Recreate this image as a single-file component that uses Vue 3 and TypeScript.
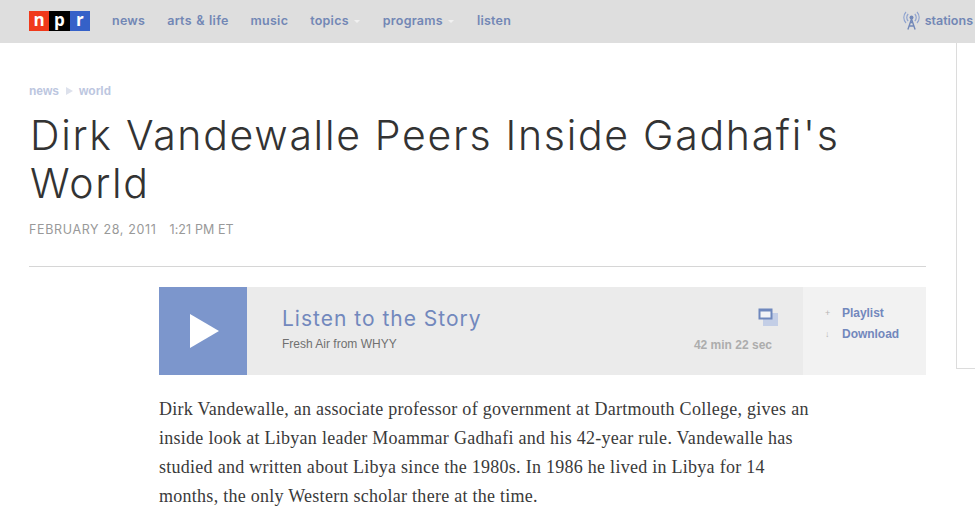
<template>
  <div class="page">
    <header class="top-nav">
      <div class="logo" aria-label="NPR">
        <span class="logo-n">n</span>
        <span class="logo-p">p</span>
        <span class="logo-r">r</span>
      </div>
      <nav class="nav-links">
        <a v-for="link in navLinks" :key="link.label" class="nav-link" :class="{ 'has-menu': link.menu }">
          {{ link.label }}
        </a>
      </nav>
      <a class="stations">
        <svg class="stations-icon" width="17" height="19" viewBox="0 0 17 19" fill="none" stroke="#8fa3cf">
          <circle cx="8.5" cy="6.5" r="2" fill="#7288b8" stroke="none" />
          <path d="M5.2 3a5 5 0 0 0 0 7M11.8 3a5 5 0 0 1 0 7" stroke-width="1.2" />
          <path d="M3 1a8 8 0 0 0 0 11M14 1a8 8 0 0 1 0 11" stroke-width="1.1" />
          <path d="M8.5 8l-3.6 10.5M8.5 8l3.6 10.5M6 15h5M7 11.5h3" stroke="#7288b8" stroke-width="1.4" />
        </svg>
        <span>stations</span>
      </a>
    </header>

    <div class="layout">
      <main class="story">
        <div class="crumbs">
          <a>news</a>
          <span class="crumb-arrow"></span>
          <a>world</a>
        </div>
        <h1 class="headline">Dirk Vandewalle Peers Inside Gadhafi's World</h1>
        <div class="dateline">
          <span class="date">FEBRUARY 28, 2011</span>
          <span class="time">1:21 PM ET</span>
        </div>

        <section class="player">
          <button class="play" aria-label="Play">
            <span class="play-arrow"></span>
          </button>
          <div class="player-main">
            <div class="player-text">
              <h2>Listen to the Story</h2>
              <p>Fresh Air from WHYY</p>
            </div>
            <div class="player-meta">
              <svg class="popout" width="20" height="18" viewBox="0 0 20 18">
                <rect x="5" y="5" width="15" height="13" fill="#c3cee6" />
                <rect x="0.5" y="0.5" width="14" height="11" fill="#6f88bd" />
                <rect x="2.5" y="3.5" width="10" height="6" fill="#f2f3f6" />
              </svg>
              <span class="duration">42 min 22 sec</span>
            </div>
          </div>
          <ul class="player-actions">
            <li v-for="action in actions" :key="action.label">
              <span class="action-mark">{{ action.mark }}</span>
              <a>{{ action.label }}</a>
            </li>
          </ul>
        </section>

        <p class="teaser">
          Dirk Vandewalle, an associate professor of government at Dartmouth College, gives an
          inside look at Libyan leader Moammar Gadhafi and his 42-year rule. Vandewalle has
          studied and written about Libya since the 1980s. In 1986 he lived in Libya for 14
          months, the only Western scholar there at the time.
        </p>
      </main>
      <aside class="rail"></aside>
    </div>
  </div>
</template>

<script setup lang="ts">
interface NavLink {
  label: string;
  menu?: boolean;
}

const navLinks: NavLink[] = [
  { label: 'news' },
  { label: 'arts & life' },
  { label: 'music' },
  { label: 'topics', menu: true },
  { label: 'programs', menu: true },
  { label: 'listen' },
];

const actions = [
  { mark: '+', label: 'Playlist' },
  { mark: '↓', label: 'Download' },
];
</script>

<style>
html,
body {
  margin: 0;
  background: #fff;
  overflow: hidden;
}
</style>

<style scoped>
.page {
  height: 513px;
  overflow: hidden;
  font-family: 'Liberation Sans', Arial, sans-serif;
}

.top-nav {
  display: flex;
  align-items: center;
  height: 43px;
  padding: 0 2px 0 29px;
  background: #dedede;
}

.logo {
  display: flex;
  width: 61px;
  height: 20px;
  margin-top: -1px;
  font: 700 17px/17px 'Open Sans', sans-serif;
  color: #fff;
  text-align: center;
}

.logo span {
  flex: 1;
}

.logo-n {
  background: #f0391b;
}

.logo-p {
  background: #000;
}

.logo-r {
  background: #3561c8;
}

.nav-links {
  display: flex;
  gap: 22px;
  margin-left: 22px;
  margin-top: -2px;
}

.nav-link,
.stations {
  font: 600 12.5px/16px Inter, sans-serif;
  color: #7287b5;
}

.nav-link {
  letter-spacing: 0.25px;
  word-spacing: 1px;
}

.nav-link.has-menu {
  position: relative;
  margin-right: 12px;
}

.nav-link.has-menu::after {
  content: '';
  position: absolute;
  right: -11px;
  top: 7px;
  border: 3px solid transparent;
  border-top-color: #f1f1f1;
}

.stations {
  display: flex;
  align-items: center;
  gap: 5px;
  margin-left: auto;
  margin-top: -2px;
}

.layout {
  display: flex;
  align-items: flex-start;
}

.story {
  box-sizing: border-box;
  flex: none;
  width: 956px;
  padding: 40px 30px 0 29px;
}

.rail {
  flex: 1;
  height: 325px;
  border-left: 1px solid #dcdcdc;
  border-bottom: 1px solid #dcdcdc;
}

.crumbs {
  display: flex;
  align-items: center;
  height: 16px;
  font-size: 12px;
  font-weight: 700;
  color: #bcc6e0;
}

.crumb-arrow {
  width: 0;
  height: 0;
  margin: 0 6px 0 7px;
  border-style: solid;
  border-width: 4px 0 4px 7px;
  border-color: transparent transparent transparent #dde1ec;
}

.headline {
  margin: 12px 0 0 1px;
  font: 300 41px/48px Inter, sans-serif;
  letter-spacing: 1.7px;
  color: #333;
}

.dateline {
  display: flex;
  gap: 13px;
  margin-top: 15px;
  padding-bottom: 28px;
  border-bottom: 1px solid #d6d6d6;
  font: 400 12.5px/16px Inter, sans-serif;
  color: #999;
}

.date {
  letter-spacing: 0.65px;
}

.time {
  letter-spacing: 0.1px;
}

.player {
  display: flex;
  height: 88px;
  margin: 20px 0 0 130px;
  background: #ebebeb;
}

.play {
  display: flex;
  align-items: center;
  justify-content: center;
  flex: none;
  width: 88px;
  padding: 0;
  border: 0;
  background: #7c96cc;
}

.play-arrow {
  width: 0;
  height: 0;
  margin-left: 2px;
  border-style: solid;
  border-width: 17px 0 17px 29px;
  border-color: transparent transparent transparent #fff;
}

.player-main {
  display: flex;
  flex: 1;
  justify-content: space-between;
  padding: 0 31px 0 35px;
}

.player-text h2 {
  margin: 19px 0 0;
  font: 400 21px/26px Inter, sans-serif;
  letter-spacing: 1px;
  color: #7288bd;
}

.player-text p {
  margin: 4px 0 0;
  font-size: 12px;
  line-height: 16px;
  color: #707070;
}

.player-meta {
  display: flex;
  flex-direction: column;
  align-items: flex-end;
  gap: 12px;
  padding-top: 21px;
}

.popout {
  margin-right: -6px;
}

.duration {
  font-size: 12px;
  font-weight: 700;
  line-height: 14px;
  color: #adadad;
}

.player-actions {
  flex: none;
  width: 123px;
  margin: 0;
  padding: 15px 0 0 22px;
  box-sizing: border-box;
  list-style: none;
  background: #f2f2f2;
}

.player-actions li {
  display: flex;
  align-items: center;
  height: 21px;
}

.action-mark {
  width: 17px;
  font-size: 9px;
  color: #b5b5b5;
}

.player-actions a {
  font-size: 12px;
  font-weight: 700;
  letter-spacing: -0.03px;
  color: #7288bd;
}

.teaser {
  width: 655px;
  margin: 20px 0 0 130px;
  font: 400 18px/29px 'Liberation Serif', 'DejaVu Serif', serif;
  letter-spacing: 0.27px;
  color: #3a3a3a;
}
</style>
